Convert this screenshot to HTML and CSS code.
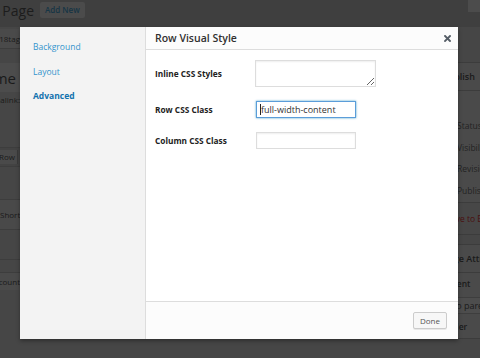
FILE: index.html
```html
<!DOCTYPE html>
<html lang="en">
<head>
    <meta charset="UTF-8">
    <meta name="viewport" content="width=device-width, initial-scale=1.0">
    <title>Edit Page</title>
    <link rel="stylesheet" href="styles.css">
</head>
<body>

<!-- the admin page, dimmed behind the modal -->
<div class="admin">
    <div class="page-head">
        <div class="title-wrap"><h2 class="page-title">Edit Page</h2></div>
        <span class="add-new">Add New</span>
        <span class="screen-options"></span>
    </div>
    <div class="columns">
        <div class="main">
            <div class="band notice"><span>Row updated 18tag</span></div>
            <div class="band title-box"><span>Home</span></div>
            <div class="band permalink"><span>Permalink:</span></div>
            <div class="band toolbar"><span class="tool-btn">Add Row</span></div>
            <div class="band builder start"><span>Shortcodes</span></div>
            <div class="band divider"></div>
            <div class="band status-bar"><span>Word count</span></div>
        </div>
        <div class="side">
            <div class="postbox">
                <h3>Publish</h3>
                <div class="minor"></div>
                <div class="misc">Status: Published</div>
                <div class="misc">Visibility: Public</div>
                <div class="misc">Revisions: 3</div>
                <div class="misc">Published on: Jan 8</div>
                <div class="major"><span class="trash">Move to Bin</span></div>
            </div>
            <div class="postbox">
                <h3>Page Attributes</h3>
                <div class="attr-label">Parent</div>
                <div class="select">(no parent)</div>
                <div class="attr-label">Order</div>
            </div>
        </div>
    </div>
</div>

<div class="modal">
    <div class="modal-nav">
        <a class="nav-link">Background</a>
        <a class="nav-link">Layout</a>
        <a class="nav-link is-active">Advanced</a>
    </div>
    <div class="modal-main">
        <div class="modal-head">
            <h1>Row Visual Style</h1>
            <button class="modal-close" type="button">
                <svg width="7" height="7" viewBox="0 0 7 7"><path d="M1 1 L6 6 M6 1 L1 6" stroke="#555d66" stroke-width="1.9" stroke-linecap="square"/></svg>
            </button>
        </div>
        <div class="modal-body">
            <label class="field-label">Inline CSS Styles</label>
            <textarea class="field-area"></textarea>
            <label class="field-label">Row CSS Class</label>
            <div class="field is-focused"><span class="caret"></span>full-width-content</div>
            <label class="field-label">Column CSS Class</label>
            <input class="field" type="text">
        </div>
        <div class="modal-foot">
            <button class="button" type="button">Done</button>
        </div>
    </div>
</div>

</body>
</html>
```

FILE: styles.css
```css
body {
    margin: 0;
    width: 480px;
    height: 358px;
    overflow: hidden;
    background-color: #464646;
    font-family: "Open Sans", "Liberation Sans", sans-serif;
    color: #1a1a1a;
    position: relative;
}

/* dimmed admin page */
.admin {
    display: flex;
    flex-direction: column;
    height: 100%;
}
.page-head {
    height: 27px;
    box-sizing: border-box;
    padding-top: 2px;
    display: flex;
    align-items: flex-start;
    background-color: #3f3f3f;
}
.title-wrap {
    width: 34px;
    display: flex;
    justify-content: flex-end;
}
.page-title {
    margin: 0;
    font-size: 14px;
    font-weight: 400;
    line-height: 17px;
    white-space: nowrap;
    color: #1c1c1c;
}
.add-new {
    margin-left: 6px;
    height: 16px;
    padding: 0 5px;
    line-height: 16px;
    font-size: 8px;
    font-weight: 600;
    color: #163545;
    background-color: #4b4b4b;
    border-radius: 2px;
}
.screen-options {
    margin-left: auto;
    margin-top: -2px;
    width: 12px;
    height: 12px;
    background-color: #4c4c4c;
}
.columns {
    display: flex;
    flex: 1;
}
.main {
    width: 20px;
    overflow: hidden;
    display: flex;
    flex-direction: column;
}
.band {
    display: flex;
    justify-content: flex-end;
    white-space: nowrap;
    font-size: 8px;
}
.band.start {
    justify-content: flex-start;
}
.notice {
    margin-top: 2px;
    height: 19px;
    align-items: center;
    background-color: #4a4a4a;
    border-bottom: 1px solid #3d3d3d;
}
.title-box {
    margin-top: 14px;
    height: 29px;
    padding-right: 4px;
    align-items: center;
    font-size: 15px;
    background-color: #4c4c4c;
}
.permalink {
    height: 14px;
    align-items: center;
}
.toolbar {
    margin-top: 41px;
    height: 18px;
    align-items: center;
    border-top: 1px solid #3d3d3d;
    border-bottom: 1px solid #3d3d3d;
    background-color: #434343;
}
.tool-btn {
    margin-right: 2px;
    padding: 0 2px;
    line-height: 14px;
    border-right: 1px solid #3a3a3a;
    background-color: #4a4a4a;
}
.builder {
    margin-top: 32px;
    height: 29px;
    align-items: center;
    border-top: 1px solid #3d3d3d;
    border-bottom: 1px solid #3d3d3d;
    background-color: #494949;
}
.divider {
    margin-top: 29px;
    height: 12px;
    border-top: 1px solid #3d3d3d;
    border-bottom: 1px solid #3d3d3d;
}
.status-bar {
    height: 17px;
    align-items: center;
    background-color: #4a4a4a;
}
.side {
    margin-left: auto;
    width: 45px;
    overflow: hidden;
}
.postbox {
    width: 180px;
    margin-top: 35px;
    background-color: #4a4a4a;
    border: 1px solid #3c3c3c;
    font-size: 8.5px;
    white-space: nowrap;
}
.postbox + .postbox {
    margin-top: 9px;
}
.postbox h3 {
    margin: 0;
    height: 27px;
    padding-left: 7px;
    line-height: 27px;
    font-size: 9px;
    font-weight: 600;
    border-bottom: 1px solid #3c3c3c;
}
.minor {
    height: 24px;
}
.misc {
    height: 21.5px;
    line-height: 21.5px;
    padding-left: 21px;
    color: #232323;
}
.major {
    margin-top: 1px;
    height: 31px;
    padding-left: 7px;
    line-height: 31px;
    border-top: 1px solid #3c3c3c;
    background-color: #474747;
}
.trash {
    color: #4a1010;
}
.attr-label {
    padding: 4px 7px;
    line-height: 14px;
    font-weight: 600;
}
.select {
    margin: 2px 7px;
    height: 15px;
    padding-left: 4px;
    line-height: 15px;
    font-size: 9px;
    border: 1px solid #3e3e3e;
    background-color: #4d4d4d;
}

/* modal */
.modal {
    position: absolute;
    left: 20px;
    top: 27px;
    width: 438px;
    height: 312px;
    display: flex;
    background: white;
    box-shadow: 0 2px 4px rgba(0, 0, 0, 0.35);
}
.modal-nav {
    width: 126px;
    padding: 8px 0 0 13px;
    box-sizing: border-box;
    display: flex;
    flex-direction: column;
    background-color: #f3f3f3;
    border-right: 1px solid #dddddd;
}
.nav-link {
    line-height: 24.5px;
    font-size: 8.5px;
    color: #3394cd;
}
.nav-link.is-active {
    font-weight: 700;
    color: #1272ae;
}
.modal-main {
    flex: 1;
    display: flex;
    flex-direction: column;
}
.modal-head {
    height: 23px;
    box-sizing: border-box;
    padding: 0 7px 0 9px;
    display: flex;
    align-items: center;
    justify-content: space-between;
    background-color: #fcfcfc;
    border-bottom: 1px solid #dddddd;
}
.modal-head h1 {
    margin: 0;
    font-size: 10.5px;
    font-weight: 600;
    color: #303030;
}
.modal-close {
    padding: 0;
    border: none;
    background: none;
    display: flex;
}
.modal-body {
    flex: 1;
    padding: 10px 0 0 9px;
    display: grid;
    grid-template-columns: 100px auto;
    align-items: center;
    align-content: start;
    row-gap: 14px;
}
.field-label {
    font-size: 8.3px;
    font-weight: 700;
    color: #222222;
}
.field-area {
    width: 121px;
    height: 27px;
    margin: 0;
    padding: 2px;
    box-sizing: border-box;
    border: 1px solid #dddddd;
    box-shadow: inset 0 1px 2px rgba(0, 0, 0, 0.07);
    resize: vertical;
}
.field {
    width: 100px;
    height: 17px;
    margin: 0 0 0 1px;
    padding: 0 3px;
    box-sizing: border-box;
    display: flex;
    align-items: center;
    font-family: "Open Sans", "Liberation Sans", sans-serif;
    font-size: 9px;
    color: #333333;
    border: 1px solid #dddddd;
    box-shadow: inset 0 1px 2px rgba(0, 0, 0, 0.07);
    outline: none;
}
.field.is-focused {
    border-color: #5b9dd9;
    box-shadow: 0 0 2px rgba(30, 140, 190, 0.8);
}
.caret {
    width: 1px;
    height: 11px;
    background-color: #222222;
}
.modal-foot {
    height: 38px;
    box-sizing: border-box;
    padding-right: 11px;
    display: flex;
    align-items: center;
    justify-content: flex-end;
    background-color: #fcfcfc;
    border-top: 1px solid #dddddd;
}
.button {
    height: 17px;
    padding: 0 6px;
    font-family: "Open Sans", "Liberation Sans", sans-serif;
    font-size: 8px;
    color: #555555;
    background-color: #f7f7f7;
    border: 1px solid #cccccc;
    border-radius: 2px;
    box-shadow: 0 1px 0 rgba(0, 0, 0, 0.08);
}
```
